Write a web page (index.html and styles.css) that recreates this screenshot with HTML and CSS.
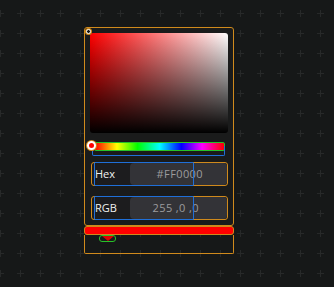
FILE: index.html
```html
<!DOCTYPE html>
<html>
<head>
<meta charset="utf-8">
<link rel="stylesheet" href="styles.css">
</head>
<body>
<div class="canvas">
  <svg class="grid" width="334" height="287" aria-hidden="true">
    <defs>
      <pattern id="plus" x="10" y="3" width="20" height="20" patternUnits="userSpaceOnUse">
        <rect x="7" y="10" width="7" height="1" fill="#272929"/>
        <rect x="10" y="7" width="1" height="7" fill="#272929"/>
      </pattern>
    </defs>
    <rect width="334" height="287" fill="url(#plus)"/>
  </svg>
  <div class="picker">
    <div class="panel">
      <div class="sv"></div>
      <span class="sv-cursor"></span>
      <div class="hue-row">
        <div class="hue"></div>
        <span class="hue-outline"></span>
        <span class="hue-handle"></span>
      </div>
      <div class="field field-hex">
        <span class="label">Hex</span>
        <span class="input">#FF0000</span>
        <span class="outline"></span>
      </div>
      <div class="field field-rgb">
        <span class="label">RGB</span>
        <span class="input">255 ,0 ,0</span>
        <span class="outline"></span>
      </div>
    </div>
    <div class="swatch"></div>
    <div class="footer">
      <div class="marker"><span class="tri"></span></div>
    </div>
  </div>
</div>
</body>
</html>
```
FILE: styles.css
```css
html, body {
  margin: 0;
  padding: 0;
}
body {
  background: #161818;
  width: 334px;
  height: 287px;
  overflow: hidden;
  font-family: "Open Sans", "Lato", sans-serif;
}
.canvas {
  position: relative;
  width: 334px;
  height: 287px;
}
.grid {
  position: absolute;
  left: 0;
  top: 0;
}
.picker {
  position: relative;
  margin-left: 84px;
  padding-top: 27px;
  width: 150px;
  display: flex;
  flex-direction: column;
}
.panel {
  position: relative;
  height: 192px;
  border: 1px solid #d08a1c;
  border-radius: 3px;
  background: #1a1b1b;
  padding: 5px 5px 0 5px;
  box-sizing: content-box;
  display: flex;
  flex-direction: column;
}
.sv {
  width: 138px;
  height: 100px;
  border-radius: 3px;
  background:
    linear-gradient(to bottom, rgba(0,0,0,0), #000),
    linear-gradient(to right, #ff0000, #ffffff);
}
.sv-cursor {
  position: absolute;
  left: 1px;
  top: 1px;
  width: 3px;
  height: 3px;
  border-radius: 50%;
  background: #151515;
  border: 1.5px solid #ffffff;
  box-shadow: 0 0 0 1px #d08a1c;
}
.hue-row {
  position: relative;
  margin-top: 9px;
  height: 9px;
}
.hue {
  position: absolute;
  left: 4px;
  top: 0;
  width: 129px;
  height: 7px;
  border: 1px solid #27c227;
  border-radius: 2px;
  background: linear-gradient(to right, #ff0000 0%, #ffff00 17%, #00ff00 33%, #00ffff 50%, #0000ff 67%, #ff00ff 83%, #ff0000 100%);
}
.hue-outline {
  position: absolute;
  left: 2px;
  top: 4px;
  width: 131px;
  height: 9px;
  border: 1px solid #1f6fd8;
  border-top: none;
  border-radius: 0 0 2px 2px;
}
.hue-handle {
  position: absolute;
  left: -3px;
  top: -1px;
  width: 5px;
  height: 5px;
  border-radius: 50%;
  background: #ff0000;
  border: 2px solid #ffffff;
  box-shadow: 0 0 0 1px #d08a1c;
}
.field {
  position: relative;
  margin-left: 1px;
  width: 135px;
  height: 22px;
  border: 1px solid #d08a1c;
  border-radius: 3px;
  display: flex;
  background: #1c1c1e;
}
.field-hex {
  margin-top: 11px;
}
.field-rgb {
  margin-top: 10px;
}
.label {
  width: 38px;
  padding-left: 3px;
  box-sizing: border-box;
  color: #f0f0f0;
  font-size: 11px;
  line-height: 22px;
}
.input {
  flex: 1;
  background: #333337;
  border-radius: 4px;
  color: #9c9c9e;
  font-size: 11px;
  letter-spacing: 0.4px;
  line-height: 22px;
  text-align: right;
  padding-right: 24px;
}
.field-rgb .input {
  padding-right: 28px;
}
.outline {
  position: absolute;
  left: 2px;
  top: -1px;
  width: 98px;
  height: 22px;
  border: 1px solid #1f6fd8;
  border-radius: 1px;
}
.swatch {
  height: 7px;
  border: 1px solid #d08a1c;
  border-radius: 3px;
  background: #ff0000;
}
.footer {
  height: 18px;
  border: 1px solid #d08a1c;
  border-top: none;
  border-radius: 0 0 2px 2px;
  padding-left: 14px;
}
.marker {
  width: 15px;
  height: 5px;
  border: 1px solid #27c227;
  border-radius: 3px;
  background: #1a1b1b;
  display: flex;
  justify-content: center;
  align-items: flex-start;
}
.tri {
  width: 0;
  height: 0;
  border-left: 6px solid transparent;
  border-right: 6px solid transparent;
  border-top: 5px solid #e00000;
}
```
